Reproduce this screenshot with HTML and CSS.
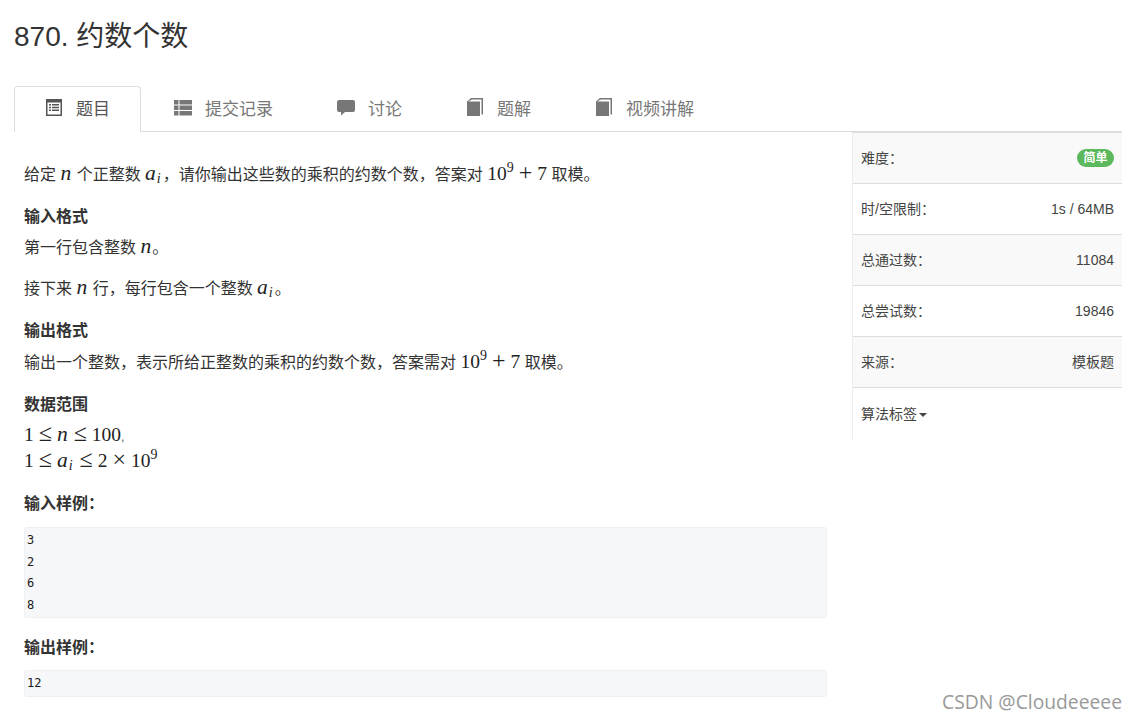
FILE: index.html
```html
<!DOCTYPE html>
<html lang="zh">
<head>
<meta charset="utf-8">
<title>870. 约数个数</title>
<link rel="stylesheet" href="styles.css">
</head>
<body>
<h1 class="title">870. 约数个数</h1>
<nav class="tabs">
  <a class="tab tab-active">
    <svg class="icon" viewBox="0 0 16 17"><path fill-rule="evenodd" d="M0 0h16v17H0zM1.500 3.500v12h13v-12zM3 5h2v1.500H3zM6 5h7v1.500H6zM3 7.800h2v1.500H3zM6 7.800h7v1.500H6zM3 10.600h2v1.500H3zM6 10.600h7v1.500H6z"/></svg>
    题目
  </a>
  <a class="tab">
    <svg class="icon icon-wide" viewBox="0 0 18 17"><path d="M0 1h4.500v4.500H0zM5.500 1H18v4.500H5.500zM0 6.500h4.500V11H0zM5.500 6.500H18V11H5.500zM0 12h4.500v4.500H0zM5.500 12H18v4.500H5.500z"/></svg>
    提交记录
  </a>
  <a class="tab">
    <svg class="icon icon-wide" viewBox="0 0 18 17"><path d="M2 1h14a2 2 0 0 1 2 2v8a2 2 0 0 1-2 2H8l-4 3.500V13H2a2 2 0 0 1-2-2V3a2 2 0 0 1 2-2z"/></svg>
    讨论
  </a>
  <a class="tab">
    <svg class="icon icon-book" viewBox="0 0 16 18"><path fill-rule="evenodd" d="M4 0h12v16.500h-1.500V1.500H5L1 3.500h12V18H0V3.500z"/></svg>
    题解
  </a>
  <a class="tab">
    <svg class="icon icon-book" viewBox="0 0 16 18"><path fill-rule="evenodd" d="M4 0h12v16.500h-1.500V1.500H5L1 3.500h12V18H0V3.500z"/></svg>
    视频讲解
  </a>
</nav>
<div class="layout">
  <main class="content">
    <p class="para first">给定 <i class="m">n</i> 个正整数 <span class="m"><i>a</i><sub>i</sub></span>，请你输出这些数的乘积的约数个数，答案对 <span class="m">10<sup>9</sup><span class="op">+</span>7</span> 取模。</p>
    <h4 class="heading">输入格式</h4>
    <p class="para">第一行包含整数 <i class="m">n</i>。</p>
    <p class="para next">接下来 <i class="m">n</i> 行，每行包含一个整数 <span class="m"><i>a</i><sub>i</sub></span>。</p>
    <h4 class="heading">输出格式</h4>
    <p class="para">输出一个整数，表示所给正整数的乘积的约数个数，答案需对 <span class="m">10<sup>9</sup><span class="op">+</span>7</span> 取模。</p>
    <h4 class="heading">数据范围</h4>
    <p class="para math-block"><span class="m">1<span class="op">≤</span><i>n</i><span class="op">≤</span>100</span><span class="comma">,</span><br><span class="m">1<span class="op">≤</span><i>a</i><sub>i</sub><span class="op">≤</span>2<span class="op">×</span>10<sup>9</sup></span></p>
    <h4 class="heading sample">输入样例：</h4>
    <pre class="code">3
2
6
8</pre>
    <h4 class="heading sample-2">输出样例：</h4>
    <pre class="code">12</pre>
  </main>
  <aside class="side">
    <div class="row"><span>难度：</span><span class="badge">简单</span></div>
    <div class="row"><span>时/空限制：</span><span>1s / 64MB</span></div>
    <div class="row"><span>总通过数：</span><span>11084</span></div>
    <div class="row"><span>总尝试数：</span><span>19846</span></div>
    <div class="row"><span>来源：</span><span>模板题</span></div>
    <div class="row"><span>算法标签<b class="caret"></b></span></div>
  </aside>
</div>
<div class="watermark">CSDN @Cloudeeeee</div>
</body>
</html>
```
FILE: styles.css
```css
* { box-sizing: border-box; }
html, body { margin: 0; padding: 0; background: #fff; }
body {
  width: 1136px;
  height: 720px;
  overflow: hidden;
  position: relative;
  color: #333;
  font-family: "Liberation Sans", "Noto Sans CJK SC", sans-serif;
  font-size: 16px;
}
.title {
  margin: 0;
  padding: 17px 0 0 14px;
  height: 86px;
  font-size: 28px;
  line-height: 40px;
  font-weight: 400;
}
.tabs {
  display: flex;
  margin-left: 14px;
  width: 1108px;
  height: 46px;
  border-bottom: 1px solid #ddd;
}
.tab {
  display: flex;
  align-items: center;
  gap: 13px;
  height: 46px;
  padding: 0 31px 5px;
  font-size: 17px;
  color: #777;
  border: 1px solid transparent;
  border-bottom: 0;
  fill: #777;
  white-space: nowrap;
}
.tab-active {
  width: 127px;
  padding-left: 31px;
  gap: 14px;
  margin-right: 1px;
  color: #555;
  fill: #555;
  background: #fff;
  border-color: #ddd;
  border-radius: 4px 4px 0 0;
}
.icon { width: 16px; height: 17px; flex: none; }
.icon-wide { width: 18px; height: 17px; }
.icon-book { width: 16px; height: 18px; margin: 0 1px; }
.layout { display: flex; width: 1122px; align-items: flex-start; }
.content { width: 852px; padding: 0 25px 0 24px; flex: none; }
.para { margin: 0; line-height: 30px; height: 30px; white-space: nowrap; }
.first { margin-top: 27px; }
.next { margin-top: 10px; }
.heading { margin: 13px 0 0; font-size: 16px; line-height: 30px; height: 30px; font-weight: 700; }
.heading + .para { margin-top: 1px; }
.m {
  font-family: "Liberation Serif", "DejaVu Serif", serif;
  font-size: 19.5px;
  color: #222;
}
i.m, .m i { font-size: 21.5px; letter-spacing: 1px; line-height: 0; }
.m sub { font-size: 14px; line-height: 0; font-style: italic; vertical-align: -3px; margin: 0 2px 0 0; }
.m sup { font-size: 14px; line-height: 0; vertical-align: 8px; }
.op { font-size: 24px; line-height: 0; margin: 0 5px; }
.comma { font-size: 12px; color: #555; }
.heading + .math-block { height: 48px; line-height: 24px; margin-top: 3px; }
.sample { margin-top: 18px; }
.sample-2 { margin-top: 15px; }
.code {
  margin: 7px 0 0;
  padding: 2px 2px 1px;
  background: #f6f7f9;
  border: 1px solid #eef0f3;
  border-radius: 3px;
  font-family: "DejaVu Sans Mono", monospace;
  font-size: 12px;
  line-height: 21.5px;
  color: #1a1a1a;
}
.sample + .code { margin-top: 8px; }
.side {
  width: 270px;
  flex: none;
  font-size: 14px;
  border-left: 1px solid #eee;
  border-top: 1px solid #ddd;
}
.row {
  display: flex;
  justify-content: space-between;
  align-items: center;
  height: 51px;
  padding: 0 8px;
  border-bottom: 1px solid #ddd;
  color: #444;
  line-height: 20px;
}
.row:nth-child(odd) { background: #f9f9f9; }
.row:last-child { border-bottom: 0; }
.badge {
  background: #5cb85c;
  color: #fff;
  font-size: 12px;
  font-weight: 700;
  line-height: 18px;
  height: 18px;
  padding: 0 6.5px;
  border-radius: 9px;
  margin-top: -1px;
}
.caret {
  display: inline-block;
  margin-left: 2px;
  vertical-align: middle;
  border-top: 4px solid #444;
  border-left: 4px solid transparent;
  border-right: 4px solid transparent;
}
.watermark {
  position: absolute;
  right: 14px;
  bottom: 6px;
  font-family: "Open Sans", sans-serif;
  font-size: 19.3px;
  line-height: 24px;
  color: #999;
}
```
